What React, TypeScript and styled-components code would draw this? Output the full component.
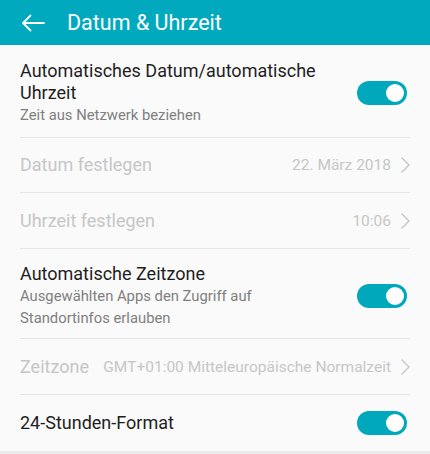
import React from "react";
import styled, { createGlobalStyle } from "styled-components";

const GlobalStyle = createGlobalStyle`
  html, body {
    margin: 0;
    padding: 0;
    background: #fafafa;
    font-family: Roboto, "Liberation Sans", sans-serif;
  }
`;

const Screen = styled.div`
  width: 430px;
  height: 454px;
  display: flex;
  flex-direction: column;
  background: #fafafa;
  overflow: hidden;
`;

const Header = styled.header`
  height: 45px;
  flex: 0 0 45px;
  background: #00a9be;
  display: flex;
  align-items: center;
  padding-left: 21px;
  gap: 22px;
  box-sizing: border-box;
`;

const Title = styled.h1`
  margin: 0;
  font-size: 21.5px;
  font-weight: 400;
  color: #ffffff;
`;

const List = styled.div`
  flex: 1;
  padding: 0 20px;
  display: flex;
  flex-direction: column;
`;

const Row = styled.div<{ $pad?: string; $height?: number; $last?: boolean }>`
  display: flex;
  align-items: center;
  justify-content: space-between;
  padding: ${({ $pad }) => $pad || "0"};
  height: ${({ $height }) => ($height ? `${$height}px` : "auto")};
  border-bottom: ${({ $last }) => ($last ? "none" : "1px solid #e6e6e6")};
  box-sizing: border-box;
`;

const Texts = styled.div`
  display: flex;
  flex-direction: column;
  max-width: 320px;
`;

const Label = styled.span<{ $disabled?: boolean }>`
  font-size: 18px;
  line-height: 22px;
  color: ${({ $disabled }) => ($disabled ? "#c6c6c6" : "#1e1e1e")};
`;

const Sub = styled.span`
  font-size: 14.8px;
  line-height: 22px;
  color: #7f7f7f;
`;

const Value = styled.span`
  display: flex;
  align-items: center;
  gap: 10px;
  font-size: 15.5px;
  color: #c6c6c6;
  white-space: nowrap;
`;

const Toggle = styled.div<{ $on: boolean }>`
  position: relative;
  width: 50px;
  height: 24px;
  margin-right: 3px;
  border-radius: 12px;
  background: ${({ $on }) => ($on ? "#00a8bc" : "#cccccc")};
  flex: 0 0 auto;

  &::after {
    content: "";
    position: absolute;
    top: 3px;
    right: ${({ $on }) => ($on ? "3px" : "29px")};
    width: 18px;
    height: 18px;
    border-radius: 50%;
    background: #ffffff;
  }
`;

const BottomStrip = styled.div`
  height: 4px;
  background: #ececec;
`;

const BackArrow = () => (
  <svg width="24" height="18" viewBox="0 0 24 18" fill="none">
    <path
      d="M23 9H2M9.5 1.5L2 9l7.5 7.5"
      stroke="#ffffff"
      strokeWidth="1.8"
      strokeLinecap="round"
      strokeLinejoin="round"
    />
  </svg>
);

const Chevron = () => (
  <svg width="9" height="16" viewBox="0 0 9 16" fill="none">
    <path
      d="M1 1l7 7-7 7"
      stroke="#c6c6c6"
      strokeWidth="1.4"
      strokeLinecap="round"
      strokeLinejoin="round"
    />
  </svg>
);

export default function App() {
  return (
    <>
      <GlobalStyle />
      <Screen>
        <Header>
          <BackArrow />
          <Title>Datum &amp; Uhrzeit</Title>
        </Header>
        <List>
          <Row $pad="15px 0 11px">
            <Texts>
              <Label>Automatisches Datum/automatische Uhrzeit</Label>
              <Sub>Zeit aus Netzwerk beziehen</Sub>
            </Texts>
            <Toggle $on />
          </Row>
          <Row $height={55}>
            <Label $disabled>Datum festlegen</Label>
            <Value>
              22. März 2018
              <Chevron />
            </Value>
          </Row>
          <Row $height={56}>
            <Label $disabled>Uhrzeit festlegen</Label>
            <Value>
              10:06
              <Chevron />
            </Value>
          </Row>
          <Row $pad="14px 0 9px">
            <Texts>
              <Label>Automatische Zeitzone</Label>
              <Sub>Ausgewählten Apps den Zugriff auf Standortinfos erlauben</Sub>
            </Texts>
            <Toggle $on />
          </Row>
          <Row $height={56}>
            <Label $disabled>Zeitzone</Label>
            <Value>
              GMT+01:00 Mitteleuropäische Normalzeit
              <Chevron />
            </Value>
          </Row>
          <Row $height={56} $last>
            <Label>24-Stunden-Format</Label>
            <Toggle $on />
          </Row>
        </List>
        <BottomStrip />
      </Screen>
    </>
  );
}
